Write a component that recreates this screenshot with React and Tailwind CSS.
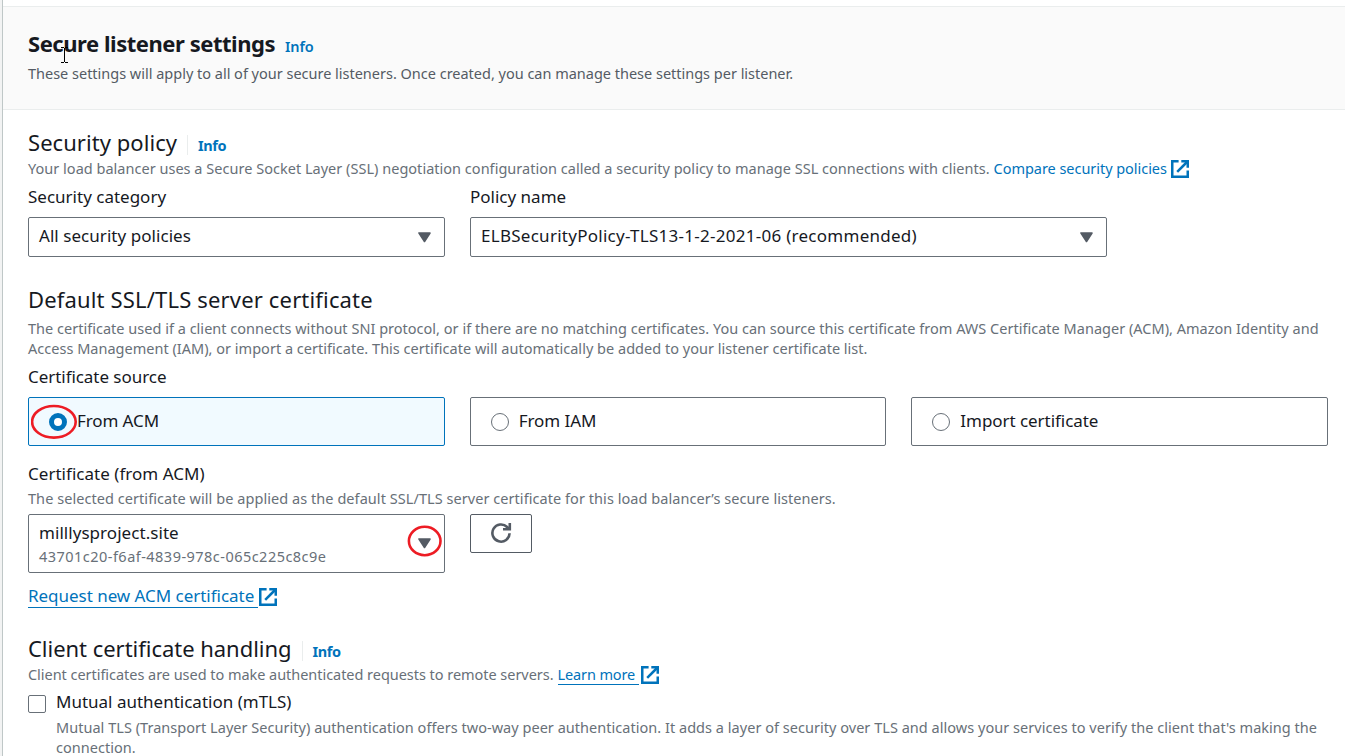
import React from "react";

function ExternalIcon({ className = "" }) {
  return (
    <svg className={"inline-block h-[18px] w-[18px] shrink-0 " + className} viewBox="0 0 18 18" fill="none" stroke="#0073bb" strokeWidth="2.5">
      <path d="M7.6 1.25H1.25V16.75H16.75V10.4" />
      <path d="M10.3 1.25H16.75V7.7" />
      <path d="M16.5 1.5L6.2 11.8" />
    </svg>
  );
}

function Caret() {
  return (
    <svg className="h-[11px] w-[13px] shrink-0" viewBox="0 0 13 11">
      <path d="M1 1H12L6.5 9.5Z" fill="#545b64" stroke="#545b64" strokeWidth="1.6" strokeLinejoin="round" />
    </svg>
  );
}

function RefreshIcon() {
  return (
    <svg className="h-[22px] w-[22px]" viewBox="0 0 22 22" fill="none" stroke="#545b64" strokeWidth="2.6">
      <path d="M19.6 11.2A8.6 8.6 0 1 1 17.1 5L19 7" />
      <path d="M19.8 1V7.2H13" />
    </svg>
  );
}

function Heading({ children, info, className = "" }) {
  return (
    <div className={"flex h-7 items-center text-[22px] leading-7 " + className}>
      <h3>{children}</h3>
      {info && (
        <a className="ml-2.5 mt-1.5 flex h-5 items-center border-l border-[#eaeded] pl-2.5 text-[14.5px] font-bold leading-5 tracking-[-0.4px] text-[#0073bb]">
          Info
        </a>
      )}
    </div>
  );
}

function Select({ children, width }) {
  return (
    <div className={"flex h-10 items-center justify-between rounded-[2px] border border-[#687078] pl-2.5 pr-[13px] " + width}>
      <span className="-mt-0.5">{children}</span>
      <Caret />
    </div>
  );
}

function Tile({ children }) {
  return (
    <div className="flex h-[49px] items-center gap-2.5 rounded-[2px] border border-[#687078] pl-5">
      <span className="h-[18px] w-[18px] rounded-full border border-[#687078]" />
      <span className="-mt-0.5 tracking-[-0.05px]">{children}</span>
    </div>
  );
}

export default function App() {
  return (
    <div className="h-[756px] w-[1345px] overflow-hidden bg-[#f2f3f3] pl-0.5 font-['Noto_Sans',sans-serif] text-[17px] leading-6 text-[#16191f]">
      <main className="relative h-full border-l border-[#bfc7c7] bg-white">
        <div className="h-1.5" />
        <header className="h-[104px] border-y border-[#eaeded] bg-[#fafafa] pl-[25px] pt-[22px]">
          <div className="flex h-7 items-center">
            <h2 className="text-[22px] font-bold leading-7 tracking-[-0.46px]">Secure listener settings</h2>
            <a className="ml-2.5 mt-1.5 text-[14.5px] font-semibold leading-5 tracking-[-0.1px] text-[#0073bb]">Info</a>
          </div>
          <p className="mt-1.5 text-[14.5px] leading-5 tracking-[-0.01px] text-[#545b64]">
            These settings will apply to all of your secure listeners. Once created, you can manage these settings per listener.
          </p>
        </header>

        <div className="flex flex-col whitespace-nowrap pl-[25px] pr-[17px] pt-[18px]">
          <Heading info className="tracking-[0.05px]">Security policy</Heading>
          <p className="mt-0.5 flex h-5 items-center text-[14.5px] leading-5 text-[#687078]">
            <span className="tracking-[0.02px]">
              Your load balancer uses a Secure Socket Layer (SSL) negotiation configuration called a security policy to manage SSL connections with clients.
            </span>
            <a className="ml-1 tracking-[-0.04px] text-[#0073bb]">Compare security policies</a>
            <ExternalIcon className="ml-1 mt-0.5" />
          </p>
          <div className="mt-[7px] flex gap-[25px]">
            <div>
              <div className="mb-2">Security category</div>
              <Select width="w-[417px] tracking-[0.05px]">All security policies</Select>
            </div>
            <div>
              <div className="mb-2">Policy name</div>
              <Select width="w-[637px] tracking-[0.27px]">ELBSecurityPolicy-TLS13-1-2-2021-06 (recommended)</Select>
            </div>
          </div>

          <Heading className="mt-7 tracking-[0.16px]">Default SSL/TLS server certificate</Heading>
          <p className="mt-[5px] text-[14.5px] leading-5 tracking-[0.015px] text-[#687078]">
            The certificate used if a client connects without SNI protocol, or if there are no matching certificates. You can source this certificate from AWS Certificate Manager (ACM), Amazon Identity and
            <br />
            Access Management (IAM), or import a certificate. This certificate will automatically be added to your listener certificate list.
          </p>
          <div className="mt-[7px] tracking-[-0.05px]">Certificate source</div>
          <div className="mt-2 grid grid-cols-3 gap-[25px]">
            <div className="relative flex h-[49px] items-center rounded-[2px] border border-[#0073bb] bg-[#f1faff] pl-5">
              <span className="h-[18px] w-[18px] rounded-full border-[5.5px] border-[#0073bb] bg-white" />
              <span className="-mt-0.5 ml-2.5 tracking-[-0.1px]">From ACM</span>
              <svg className="absolute left-0.5 top-1.5 h-9 w-[47px]" viewBox="0 0 47 36" fill="none">
                <ellipse cx="22.9" cy="17.8" rx="21.8" ry="15.8" stroke="#ed1c24" strokeWidth="2.6" />
              </svg>
            </div>
            <Tile>From IAM</Tile>
            <Tile>Import certificate</Tile>
          </div>

          <div className="mt-4 tracking-[0.03px]">Certificate (from ACM)</div>
          <p className="mt-0.5 text-[14.5px] leading-5 tracking-[0.055px] text-[#687078]">
            The selected certificate will be applied as the default SSL/TLS server certificate for this load balancer’s secure listeners.
          </p>
          <div className="mt-1.5 flex gap-[25px]">
            <div className="relative flex h-[59px] w-[417px] items-center justify-between rounded-[2px] border border-[#687078] pl-2.5 pr-[13px]">
              <div>
                <div className="mt-px tracking-[0.05px]">milllysproject.site</div>
                <div className="-mt-px text-[14.5px] leading-6 tracking-[0.47px] text-[#687078]">43701c20-f6af-4839-978c-065c225c8c9e</div>
              </div>
              <Caret />
              <svg className="absolute right-px top-2.5 h-8 w-9" viewBox="0 0 36 32" fill="none">
                <ellipse cx="17.7" cy="16" rx="15.8" ry="14.2" stroke="#ed1c24" strokeWidth="2.6" />
              </svg>
            </div>
            <button className="flex h-[39px] w-[62px] items-center justify-center rounded-[2px] border border-[#545b64] pb-0.5">
              <RefreshIcon />
            </button>
          </div>
          <div className="mt-[11px] flex h-6 items-center text-[#0073bb]">
            <a className="h-6 w-[230px] border-b border-[#0073bb] leading-6 tracking-[-0.03px]">Request new ACM certificate</a>
            <ExternalIcon className="ml-px mt-0.5" />
          </div>

          <Heading info className="mt-[26px] tracking-[-0.03px]">Client certificate handling</Heading>
          <p className="mt-0.5 flex h-5 items-center text-[14.5px] leading-5 text-[#687078]">
            <span className="tracking-[-0.04px]">Client certificates are used to make authenticated requests to remote servers.</span>
            <a className="ml-1 h-[21px] w-[81px] border-b border-[#0073bb] tracking-[-0.12px] text-[#0073bb]">Learn more</a>
            <ExternalIcon className="ml-[2px] mt-0.5" />
          </p>
          <div className="mt-1.5 flex gap-2.5">
            <span className="mt-[5px] h-[18px] w-[18px] shrink-0 rounded-[2px] border border-[#687078]" />
            <div>
              <div>Mutual authentication (mTLS)</div>
              <p className="mt-[3px] text-[14.5px] leading-5 tracking-[0.03px] text-[#687078]">
                Mutual TLS (Transport Layer Security) authentication offers two-way peer authentication. It adds a layer of security over TLS and allows your services to verify the client that's making the
                <br />
                connection.
              </p>
            </div>
          </div>
        </div>

        <svg className="absolute left-[58px] top-[47px] h-4 w-[7px]" viewBox="0 0 7 16" shapeRendering="crispEdges" stroke="#000" fill="none">
          <path d="M0 .5H3M4 .5H7M3.5 1V15M0 15.5H3M4 15.5H7" />
        </svg>
      </main>
    </div>
  );
}
